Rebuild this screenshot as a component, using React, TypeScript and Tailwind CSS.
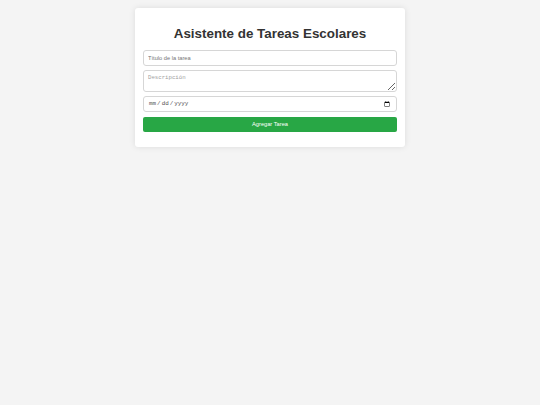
import React, { useState } from "react";

export default function App() {
  const [title, setTitle] = useState("");
  const [desc, setDesc] = useState("");
  const [date, setDate] = useState("");

  return (
    <div className="min-h-screen bg-[#f4f4f4] pt-[8px] font-['Liberation_Sans',Arial,sans-serif]">
      <div className="mx-auto w-[270px] rounded-[3px] bg-white px-[8px] pb-[15px] pt-[18px] shadow-[0_0_6px_rgba(0,0,0,0.1)]">
        <h1 className="text-center text-[13.4px] font-bold leading-[15px] text-[#333]">
          Asistente de Tareas Escolares
        </h1>

        <form className="mt-[9px] flex flex-col" onSubmit={(e) => e.preventDefault()}>
          <input
            type="text"
            value={title}
            onChange={(e) => setTitle(e.target.value)}
            placeholder="Título de la tarea"
            className="h-[16px] w-full rounded-[3px] border border-[#d6d6d6] px-[4px] text-[5.7px] text-[#333] outline-none placeholder:text-[#757575]"
          />
          <textarea
            value={desc}
            onChange={(e) => setDesc(e.target.value)}
            placeholder="Descripción"
            className="mt-[4px] block h-[22px] w-full rounded-[3px] border border-[#d6d6d6] px-[4px] py-[3px] font-['Liberation_Mono',monospace] text-[5.7px] leading-[7px] text-[#333] outline-none placeholder:text-[#a0a0a0]"
          />
          <input
            type="date"
            value={date}
            onChange={(e) => setDate(e.target.value)}
            className="mt-[4px] h-[16px] w-full rounded-[3px] border border-[#d6d6d6] px-[4px] font-['Liberation_Mono',monospace] text-[5.9px] text-[#555] outline-none"
          />
          <button
            type="submit"
            className="mt-[5px] h-[15px] w-full rounded-[2px] bg-[#28a745] text-[5.7px] text-white"
          >
            Agregar Tarea
          </button>
        </form>
      </div>
    </div>
  );
}
